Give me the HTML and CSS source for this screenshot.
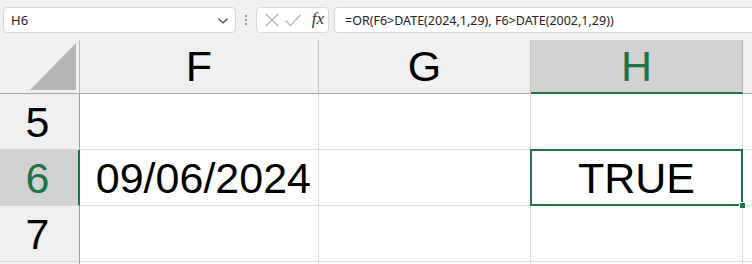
FILE: index.html
```html
<!DOCTYPE html>
<html>
<head>
<meta charset="utf-8">
<link rel="stylesheet" href="styles.css">
</head>
<body>
<div class="app">
  <div class="topbar">
    <div class="namebox">
      <span class="name">H6</span>
      <svg class="chev" width="12" height="8" viewBox="0 0 12 8"><path d="M1.5 1.8 L6 6 L10.5 1.8" fill="none" stroke="#444" stroke-width="1.2"/></svg>
    </div>
    <div class="dots"><i></i><i></i><i></i></div>
    <div class="fbtns">
      <svg width="16" height="16" viewBox="0 0 16 16"><path d="M2 2 L14 14 M14 2 L2 14" stroke="#b4b4b4" stroke-width="1.2" fill="none"/></svg>
      <svg width="18" height="16" viewBox="0 0 18 16"><path d="M1.5 8.5 L6.5 13.5 L16.5 3" stroke="#b4b4b4" stroke-width="1.2" fill="none"/></svg>
      <span class="fx">fx</span>
    </div>
    <div class="formula">=OR(F6&gt;DATE(2024,1,29), F6&gt;DATE(2002,1,29))</div>
  </div>
  <div class="sheet">
    <div class="hdr corner"><div class="tri"></div></div>
    <div class="hdr col">F</div>
    <div class="hdr col">G</div>
    <div class="hdr col sel">H</div>
    <div class="hdr col rest"></div>

    <div class="rh">5</div>
    <div class="cell"></div>
    <div class="cell"></div>
    <div class="cell"></div>
    <div class="cell rest"></div>

    <div class="rh sel">6</div>
    <div class="cell num">09/06/2024</div>
    <div class="cell"></div>
    <div class="cell active">TRUE<span class="handle"></span></div>
    <div class="cell rest"></div>

    <div class="rh">7</div>
    <div class="cell"></div>
    <div class="cell"></div>
    <div class="cell"></div>
    <div class="cell rest"></div>

    <div class="rh"></div>
    <div class="cell"></div>
    <div class="cell"></div>
    <div class="cell"></div>
    <div class="cell rest"></div>
  </div>
</div>
</body>
</html>
```
FILE: styles.css
```css
* { box-sizing: border-box; }
html, body { margin: 0; padding: 0; }
body { width: 752px; height: 264px; overflow: hidden; background: #fff; font-family: "Liberation Sans", Arial, sans-serif; }

.topbar {
  height: 40px;
  background: #f0f0f0;
  display: flex;
  align-items: flex-start;
  padding-top: 7px;
  padding-left: 3px;
}
.namebox {
  width: 233px;
  height: 26px;
  background: #fff;
  border: 1px solid #d4d4d4;
  border-radius: 4px;
  display: flex;
  align-items: center;
  justify-content: space-between;
  padding: 0 6px 0 7px;
}
.name { font-family: "Noto Sans", "Open Sans", sans-serif; font-size: 13px; color: #222; }
.chev { margin-top: 1px; }
.dots {
  width: 20px;
  height: 26px;
  display: flex;
  flex-direction: column;
  align-items: center;
  justify-content: center;
  gap: 2px;
}
.dots i { display: block; width: 2px; height: 2px; background: #9a9a9a; }
.fbtns {
  width: 73px;
  height: 26px;
  background: #fff;
  border: 1px solid #d9d9d9;
  border-radius: 4px;
  display: flex;
  align-items: center;
  padding: 0 4px 0 7px;
  gap: 4px;
}
.fx {
  margin-left: auto;
  font-family: "Liberation Serif", "Times New Roman", serif;
  font-style: italic;
  font-size: 17px;
  color: #333;
  margin-top: -2px;
}
.formula {
  margin-left: 5px;
  flex: 1;
  height: 26px;
  background: #fff;
  border: 1px solid #d4d4d4;
  border-right: none;
  border-radius: 4px 0 0 4px;
  font-family: "Noto Sans", "Open Sans", sans-serif;
  font-size: 12.5px;
  color: #222;
  display: flex;
  align-items: center;
  padding-left: 10px;
  white-space: nowrap;
}

.sheet {
  display: grid;
  grid-template-columns: 80px 239px 212px 212px 1fr;
  grid-template-rows: 54px 56px 56px 56px 2px;
  font-size: 43px;
  color: #000;
  overflow: hidden;
}
.hdr {
  background: #f0f0f0;
  border-right: 1px solid #c4c4c4;
  border-bottom: 1px solid #a8a8a8;
  display: flex;
  align-items: center;
  justify-content: center;
}
.corner {
  align-items: flex-end;
  justify-content: flex-end;
  padding: 0 3px 3px 0;
  border-right-color: #bdbdbd;
}
.tri {
  width: 46px;
  height: 47px;
  background: #b6b6b6;
  clip-path: polygon(100% 0, 100% 100%, 0 100%);
}
.hdr.sel {
  background: #d2d2d2;
  color: #217346;
  border-bottom: 2px solid #217346;
  border-right-color: #b0b0b0;
}
.hdr.rest { border-right: none; }
.rh {
  background: #f0f0f0;
  border-right: 1px solid #9e9e9e;
  border-bottom: 1px solid #d6d6d6;
  display: flex;
  align-items: center;
  justify-content: center;
  padding: 2px 4px 0 0;
}
.rh.sel {
  background: #d2d2d2;
  color: #217346;
  border-right: 2px solid #217346;
  padding-right: 3px;
}
.cell {
  border-right: 1px solid #dcdcdc;
  border-bottom: 1px solid #dcdcdc;
  display: flex;
  align-items: center;
  justify-content: center;
  padding-top: 2px;
}
.cell.num { justify-content: flex-end; padding-right: 7px; }
.cell.rest { border-right: none; }
.active { position: relative; }
.active::after {
  content: "";
  position: absolute;
  left: -1px;
  top: -1px;
  right: -1px;
  bottom: -1px;
  border: 2px solid #217346;
}
.handle {
  position: absolute;
  right: -4px;
  bottom: -4px;
  width: 7px;
  height: 7px;
  background: #217346;
  border: 1px solid #fff;
  z-index: 2;
}
```
